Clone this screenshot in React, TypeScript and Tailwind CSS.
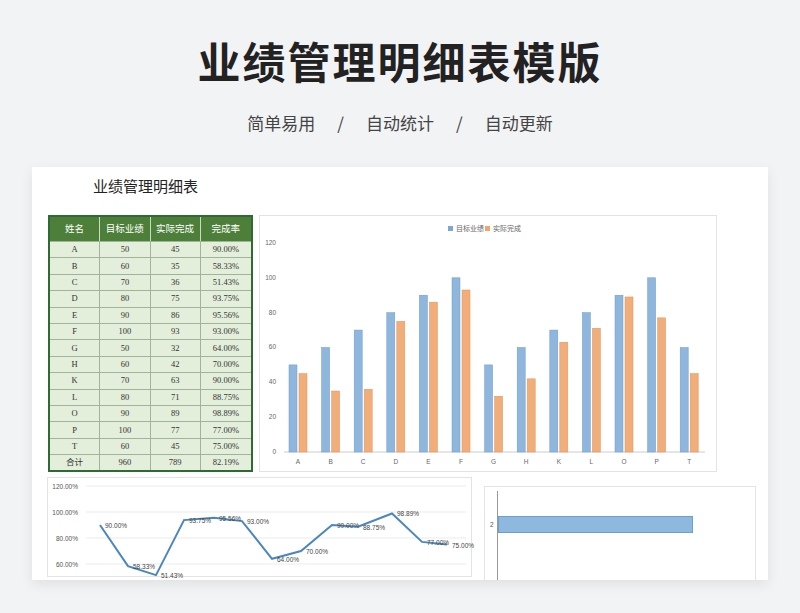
const rows: [string, number, number, string][] = [
  ['A', 50, 45, '90.00%'], ['B', 60, 35, '58.33%'], ['C', 70, 36, '51.43%'], ['D', 80, 75, '93.75%'],
  ['E', 90, 86, '95.56%'], ['F', 100, 93, '93.00%'], ['G', 50, 32, '64.00%'], ['H', 60, 42, '70.00%'],
  ['K', 70, 63, '90.00%'], ['L', 80, 71, '88.75%'], ['O', 90, 89, '98.89%'], ['P', 100, 77, '77.00%'],
  ['T', 60, 45, '75.00%'],
];
const serif = { fontFamily: '"Liberation Serif", "Noto Sans CJK SC", serif' };

function BarChart() {
  const y0 = 236, k = 1.742, x0 = 38, step = 32.6;
  return (
    <svg width="456" height="254" className="block">
      <rect x="188" y="10" width="5" height="5" fill="#79a8d6" />
      <text x="196" y="15" fontSize="7" fill="#666">目标业绩</text>
      <rect x="225" y="10" width="5" height="5" fill="#f0a56a" />
      <text x="233" y="15" fontSize="7" fill="#666">实际完成</text>
      {[0, 20, 40, 60, 80, 100, 120].map((v) => (
        <text key={v} x="16" y={y0 - v * k + 2} fontSize="6.5" fill="#666" textAnchor="end">{v}</text>
      ))}
      <line x1="24" y1={y0} x2="445" y2={y0} stroke="#ccc" />
      {rows.map((r, i) => {
        const c = x0 + i * step;
        return (
          <g key={r[0]}>
            <rect x={c - 9} y={y0 - r[1] * k} width="8" height={r[1] * k} fill="#8fb6dd" stroke="#6c9ccc" strokeWidth="0.5" />
            <rect x={c + 1} y={y0 - r[2] * k} width="8" height={r[2] * k} fill="#f1ad7a" stroke="#e0925a" strokeWidth="0.5" />
            <text x={c} y={y0 + 12} fontSize="6.5" fill="#666" textAnchor="middle">{r[0]}</text>
          </g>
        );
      })}
    </svg>
  );
}

function LineChart() {
  const vals = [90, 58.33, 51.43, 93.75, 95.56, 93, 64, 70, 90, 88.75, 98.89, 77, 75];
  const xs = [52, 80, 108, 136, 166, 194, 224, 253, 284, 310, 344, 374, 399];
  const y = (v: number) => 34 + (100 - v) * 1.3;
  return (
    <svg width="424" height="100" className="block overflow-visible">
      {[120, 100, 80, 60].map((v) => (
        <g key={v}>
          <text x="30" y={y(v) + 2.5} fontSize="6.5" fill="#555" textAnchor="end">{v.toFixed(2)}%</text>
          <line x1="38" y1={y(v)} x2="418" y2={y(v)} stroke="#ddd" strokeWidth="0.6" />
        </g>
      ))}
      <polyline points={vals.map((v, i) => `${xs[i]},${y(v)}`).join(' ')} fill="none" stroke="#4a87c0" strokeWidth="2" />
      {vals.map((v, i) => (
        <text key={i} x={xs[i] + 5} y={y(v) + 3} fontSize="6.5" fill="#444">{v.toFixed(2)}%</text>
      ))}
    </svg>
  );
}

export default function App() {
  return (
    <div className="w-[800px] h-[613px] bg-[#f2f3f5] overflow-hidden" style={{ fontFamily: '"Noto Sans CJK SC", sans-serif' }}>
      <h1 className="pt-[34px] text-center text-[43px] leading-[52px] font-bold text-[#222] tracking-[2px]">业绩管理明细表模版</h1>
      <div className="mt-[25px] flex justify-center gap-[22px] text-[17px] text-[#444] leading-[24px]">
        <span>简单易用</span><span>/</span><span>自动统计</span><span>/</span><span>自动更新</span>
      </div>
      <div className="mx-[32px] mt-[32px] h-[413px] bg-white shadow-[0_4px_12px_rgba(0,0,0,0.08)] overflow-hidden">
        <div className="pl-[61px] pt-[10px] text-[15px] text-[#222] leading-[20px]" style={serif}>业绩管理明细表</div>
        <div className="flex mt-[18px] pl-[16px] gap-[6px]">
          <div className="w-[205px] border-2 border-[#2e6b34] text-[8.5px] text-[#333]" style={serif}>
            <div className="grid grid-cols-4 h-[24px] bg-[#4d7f3a] text-white text-[9.5px]">
              {['姓名', '目标业绩', '实际完成', '完成率'].map((h) => (
                <div key={h} className="flex items-center justify-center border-r border-[#c9dcc0] last:border-r-0">{h}</div>
              ))}
            </div>
            {[...rows, ['合计', 960, 789, '82.19%'] as [string, number, number, string]].map((r) => (
              <div key={r[0]} className="grid grid-cols-4 h-[16.4px] bg-[#e3efdb] border-t border-[#9fb49a]">
                {r.map((c, i) => (
                  <div key={i} className="flex items-center justify-center border-r border-[#9fb49a] last:border-r-0">{c}</div>
                ))}
              </div>
            ))}
          </div>
          <div className="border border-[#e3e3e3]" style={{ fontFamily: '"Liberation Sans", "Noto Sans CJK SC", sans-serif' }}>
            <BarChart />
          </div>
        </div>
        <div className="flex mt-[5px] pl-[15px] gap-[12px]" style={{ fontFamily: '"Liberation Sans", sans-serif' }}>
          <div className="w-[425px] h-[100px] border border-[#e3e3e3]"><LineChart /></div>
          <div className="w-[272px] h-[100px] mt-[9px] border border-[#e3e3e3] relative">
            <div className="absolute left-[12px] top-[4px] bottom-0 w-px bg-[#999]" />
            <div className="absolute left-[5px] top-[33px] text-[6.5px] text-[#555]">2</div>
            <div className="absolute left-[13px] top-[29px] w-[195px] h-[17px] bg-[#8fb8de] border border-[#6b9fd0]" />
          </div>
        </div>
      </div>
    </div>
  );
}
